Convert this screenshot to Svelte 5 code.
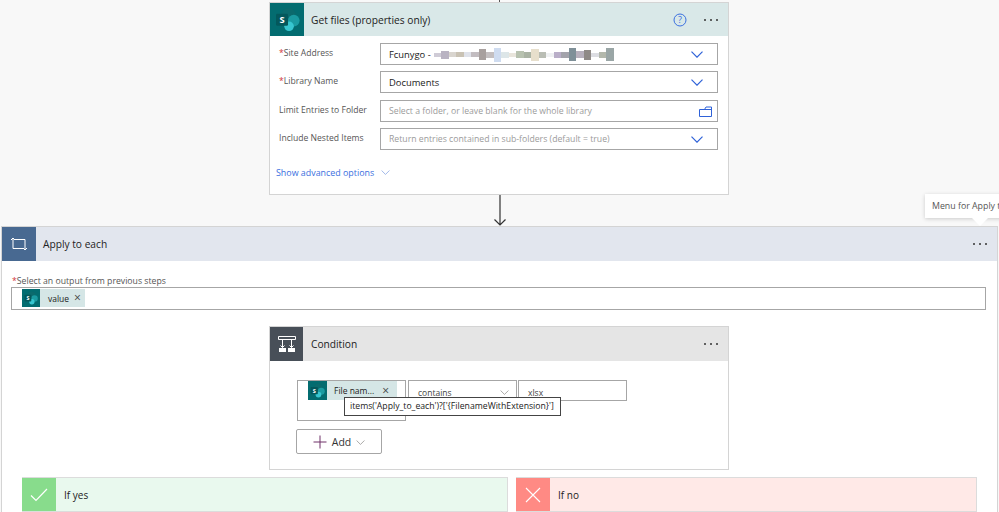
<script>
  // colours and heights of the blurred-out site name, one block per pixelated cell
  const blurred = [
    ['#cfcbd6', 4], ['#b9b3c2', 8], ['#d9d5cf', 5], ['#c9c2b4', 5], ['#dfe2ea', 5], ['#c2bcc0', 5], ['#a8a09e', 11], ['#c4bfc0', 6],
    ['#cfdcf0', 14], ['#dde6e8', 6], ['#e9e5dc', 4], ['#b8c2b0', 7], ['#aab3a4', 6], ['#e7dfcc', 12], ['#b9bdb4', 6], ['#eef0f2', 4],
    ['#b9aec8', 6], ['#a3a3ab', 6], ['#7f9098', 13], ['#b7b0bc', 7], ['#8f8a86', 10], ['#dcdde2', 4], ['#b3b8ac', 6], ['#9aa6a6', 13]
  ];
  const fields = [
    { label: 'Site Address', required: true, kind: 'blur', value: 'Fcunygo -', icon: 'chev' },
    { label: 'Library Name', required: true, kind: 'value', value: 'Documents', icon: 'chev' },
    { label: 'Limit Entries to Folder', required: false, kind: 'hint', value: 'Select a folder, or leave blank for the whole library', icon: 'folder' },
    { label: 'Include Nested Items', required: false, kind: 'hint', value: 'Return entries contained in sub-folders (default = true)', icon: 'chev' }
  ];
</script>

{#snippet spLogo(size)}
  <svg class="sp-logo" width={size} height={size} viewBox="0 0 24 24" aria-hidden="true">
    <circle cx="13" cy="8" r="7" fill="#0b6a6d" />
    <circle cx="18" cy="13" r="5.6" fill="#1a9ba1" />
    <circle cx="13.5" cy="18.5" r="4.6" fill="#37c6d0" />
    <rect x="1" y="6.5" width="11.5" height="11.5" rx="1.2" fill="#04585c" />
    <text x="6.8" y="15.6" text-anchor="middle" class="sp-s">S</text>
  </svg>
{/snippet}

{#snippet chevron(color, w, sw = 1)}
  <svg width={w} height={Math.round(w * 0.58)} viewBox="0 0 12 7" aria-hidden="true">
    <path d="M.5.7 6 6.2 11.5.7" fill="none" stroke={color} stroke-width={sw} />
  </svg>
{/snippet}

<div class="canvas">
  <div class="tick"></div>

  <section class="card action">
    <header class="head sp-head">
      <div class="tile sp-tile">{@render spLogo(25)}</div>
      <span class="title">Get files (properties only)</span>
      <svg class="help" width="14" height="14" viewBox="0 0 14 14" aria-hidden="true">
        <circle cx="7" cy="7" r="6" fill="none" stroke="#3a6fe0" stroke-width="1" />
        <text x="7" y="10.2" text-anchor="middle" class="help-q">?</text>
      </svg>
      <span class="dots"><i></i><i></i><i></i></span>
    </header>
    <div class="fields">
      {#each fields as f}
        <div class="field">
          <span class="field-label">{#if f.required}<b>*</b>{/if}{f.label}</span>
          <div class="input">
            <span class="text" class:hint={f.kind === 'hint'}>{f.value}</span>
            {#if f.kind === 'blur'}
              <span class="blur">
                {#each blurred as [c, h]}
                  <i style="background:{c};height:{h}px"></i>
                {/each}
              </span>
            {/if}
            {#if f.icon === 'chev'}
              <span class="end">{@render chevron('#2f62d8', 12, 1.2)}</span>
            {:else}
              <svg class="end folder" width="13" height="11" viewBox="0 0 13 11" aria-hidden="true">
                <path d="M.5 3.5h12M.5 3.5v7h12v-9.5H7L5.5 3.5" fill="none" stroke="#2f62d8" stroke-width="1" />
              </svg>
            {/if}
          </div>
        </div>
      {/each}
      <div class="advanced">
        <span>Show advanced options</span>
        {@render chevron('#7c9ce0', 9)}
      </div>
    </div>
  </section>

  <div class="arrow">
    <svg width="14" height="31" viewBox="0 0 14 31" aria-hidden="true">
      <path d="M7 0v30M1.5 24.5 7 30l5.5-5.5" fill="none" stroke="#333" stroke-width="1.2" />
    </svg>
  </div>

  <section class="loop">
    <div class="tooltip">Menu for Apply to each</div>
    <header class="head loop-head">
      <div class="tile loop-tile">
        <svg width="18" height="14" viewBox="0 0 18 14" aria-hidden="true">
          <path d="M1 3 3 1l2 2M3 1v10.5h10M5 2.5h10V13M13 11l2 2 2-2" fill="none" stroke="#fff" stroke-width="1" />
        </svg>
      </div>
      <span class="title">Apply to each</span>
      <span class="dots"><i></i><i></i><i></i></span>
    </header>
    <div class="loop-body">
      <div class="output-label"><b>*</b>Select an output from previous steps</div>
      <div class="output-input">
        <span class="token">
          <span class="token-icon">{@render spLogo(14)}</span>
          <span class="token-text">value</span>
          <span class="token-x">×</span>
        </span>
      </div>

      <section class="card condition">
        <header class="head cond-head">
          <div class="tile cond-tile">
            <svg width="20" height="20" viewBox="0 0 20 20" aria-hidden="true">
              <path d="M1.5 2.5h17v3h-17zM5.5 5.5v8M14.5 5.5v8M3.5 11.5l2 2 2-2M12.5 11.5l2 2 2-2" fill="none" stroke="#fff" stroke-width="1" />
              <path d="M2 14h7v4H2zM11 14h7v4h-7z" fill="#fff" />
            </svg>
          </div>
          <span class="title">Condition</span>
          <span class="dots"><i></i><i></i><i></i></span>
        </header>
        <div class="cond-body">
          <div class="rule">
            <div class="rule-left">
              <span class="token wide">
                <span class="token-icon big">{@render spLogo(15)}</span>
                <span class="token-text">File nam...</span>
                <span class="token-x">×</span>
              </span>
            </div>
            <div class="rule-box contains">
              <span>contains</span>
              {@render chevron('#8a8886', 9)}
            </div>
            <div class="rule-box xlsx">xlsx</div>
            <div class="expr">items('Apply_to_each')?['{'{'}FilenameWithExtension}']</div>
          </div>
          <button class="add" type="button">
            <svg width="14" height="14" viewBox="0 0 14 14" aria-hidden="true">
              <path d="M7 .5v13M.5 7h13" stroke="#6f3069" stroke-width="1" fill="none" />
            </svg>
            <span>Add</span>
            {@render chevron('#8a8886', 9)}
          </button>
        </div>
      </section>

      <div class="branches">
        <div class="branch yes">
          <div class="tile yes-tile">
            <svg width="18" height="14" viewBox="0 0 18 14" aria-hidden="true">
              <path d="M1 7.5 6 12.5 17 1" fill="none" stroke="#fff" stroke-width="1.2" />
            </svg>
          </div>
          <span class="branch-title">If yes</span>
        </div>
        <div class="branch no">
          <div class="tile no-tile">
            <svg width="16" height="16" viewBox="0 0 16 16" aria-hidden="true">
              <path d="M1 1l14 14M15 1 1 15" fill="none" stroke="#fff" stroke-width="1.1" />
            </svg>
          </div>
          <span class="branch-title">If no</span>
        </div>
      </div>
    </div>
  </section>
</div>

<style>
  :global(body) {
    margin: 0;
    background: #f8f8f8;
  }

  .canvas {
    width: 999px;
    height: 512px;
    overflow: hidden;
    display: flex;
    flex-direction: column;
    align-items: center;
    font-family: "Open Sans", "Noto Sans", sans-serif;
    font-size: 9px;
    color: #333;
  }

  .tick {
    width: 1px;
    height: 2px;
    flex: none;
    background: #555;
  }

  .card {
    width: 460px;
    box-sizing: border-box;
    border: 1px solid #d4d4d4;
    background: #fff;
    flex: none;
  }

  .action {
    margin-right: 1px;
  }

  .head {
    display: flex;
    align-items: center;
    height: 34px;
  }

  .sp-head { height: 33px; }

  .tile {
    width: 34px;
    height: 100%;
    flex: none;
    display: flex;
    align-items: center;
    justify-content: center;
  }

  .title {
    flex: 1;
    margin-left: 7px;
    font-size: 10.2px;
    color: #222;
  }

  .sp-head { background: #d9e8e8; }
  .sp-tile { background: #036c70; }
  .loop-head { background: #e2e6ee; height: 34px; }
  .loop-tile { background: #486991; }
  .cond-head { background: #e5e5e5; }
  .cond-tile { background: #484f58; }

  .sp-s {
    font-size: 9px;
    font-weight: 700;
    fill: #fff;
  }

  .help-q {
    font-size: 9px;
    fill: #3a6fe0;
  }

  .help { margin-right: 17px; }

  .dots {
    display: flex;
    gap: 4px;
    margin-right: 10px;
  }

  .dots i {
    width: 2px;
    height: 2px;
    border-radius: 50%;
    background: #333;
  }

  .fields {
    height: 158px;
    box-sizing: border-box;
    padding: 7px 10px 0 9px;
  }

  .field {
    display: flex;
    height: 22px;
    margin-bottom: 6.33px;
  }

  .field-label {
    width: 101px;
    flex: none;
    font-size: 8.6px;
    color: #555;
    line-height: 20px;
  }

  b {
    color: #d13438;
    font-weight: 400;
  }

  .input {
    flex: 1;
    display: flex;
    align-items: center;
    box-sizing: border-box;
    border: 1px solid #a6a6a6;
    padding: 1px 8px 0;
    background: #fff;
  }

  .text { font-size: 9.4px; color: #222; }
  .text.hint { font-size: 8.7px; color: #9b9b9b; }

  .blur {
    display: flex;
    align-items: center;
    margin-left: 3px;
  }

  .blur i {
    width: 7.5px;
    display: block;
  }

  .end {
    margin-left: auto;
    margin-right: 6px;
    display: flex;
  }

  .end.folder {
    margin-right: -3px;
  }

  .advanced {
    display: flex;
    align-items: center;
    gap: 7px;
    margin: 16px 0 0 -3px;
    font-size: 8.9px;
    color: #3a6fe0;
  }

  .arrow {
    height: 31px;
    flex: none;
    display: flex;
  }

  .loop {
    position: relative;
    flex: none;
    width: 997px;
    box-sizing: border-box;
    border: 1px solid #d4d4d4;
    background: #fff;
  }

  .tooltip {
    position: absolute;
    top: -33px;
    left: 923px;
    width: 90px;
    height: 24px;
    padding-left: 7px;
    line-height: 25px;
    background: #fff;
    white-space: nowrap;
    font-size: 8.8px;
    color: #555;
    box-shadow: 0 1px 4px rgba(0, 0, 0, .18);
  }

  .tooltip::after {
    content: '';
    position: absolute;
    left: 47px;
    bottom: -8px;
    border: 8px solid transparent;
    border-bottom: 0;
    border-top-color: #fff;
  }

  .loop-body {
    padding: 14px 10px 0 9px;
  }

  .output-label {
    margin-left: 1px;
    font-size: 8.7px;
    color: #555;
    line-height: 12px;
  }

  .output-input {
    height: 23px;
    box-sizing: border-box;
    border: 1px solid #a6a6a6;
    padding: 1px 10px;
    width: 975px;
  }

  .token {
    display: inline-flex;
    align-items: center;
    height: 18px;
    background: #d5e6e6;
    padding-right: 4px;
  }

  .token-icon {
    width: 18px;
    height: 18px;
    background: #036c70;
    display: flex;
    align-items: center;
    justify-content: center;
    margin-right: 8px;
  }

  .token-text { font-size: 8.5px; color: #222; }

  .token-x {
    margin-left: 5px;
    font-size: 12px;
    line-height: 12px;
    color: #444;
  }

  .condition {
    margin: 16px 0 0 258px;
    height: 144px;
  }

  .condition .tile { width: 33px; }
  .condition .title { margin-left: 8px; }

  .cond-body {
    padding: 19px 0 0 27px;
  }

  .rule {
    position: relative;
    display: flex;
    gap: 1px;
    align-items: flex-start;
  }

  .rule-left {
    width: 109px;
    height: 41px;
    box-sizing: border-box;
    border: 1px solid #a6a6a6;
    padding-left: 10px;
    margin-right: 1px;
  }

  .token.wide {
    width: 89px;
    height: 19px;
    box-sizing: border-box;
    justify-content: flex-start;
  }

  .token-icon.big {
    width: 19px;
    height: 19px;
    margin-right: 7px;
  }

  .token.wide .token-x { margin-left: 8px; }

  .rule-box {
    width: 109px;
    height: 21px;
    box-sizing: border-box;
    border: 1px solid #a6a6a6;
    display: flex;
    align-items: center;
    justify-content: space-between;
    padding: 3px 7px 0 9px;
    font-size: 8.5px;
    color: #444;
  }

  .expr {
    position: absolute;
    left: 47px;
    top: 17px;
    width: 217px;
    height: 19px;
    padding: 0 5px;
    box-sizing: border-box;
    border: 1px solid #444;
    background: #fff;
    white-space: nowrap;
    line-height: 17px;
    font-size: 8.7px;
    color: #222;
  }

  .add {
    margin: 8px 0 0 -1px;
    width: 86px;
    height: 25px;
    display: flex;
    align-items: center;
    justify-content: center;
    gap: 5px;
    border: 1px solid #a6a6a6;
    border-radius: 2px;
    background: #fff;
    font-family: inherit;
    font-size: 10.5px;
    color: #333;
    padding: 1px 0 0;
  }

  .branches {
    display: flex;
    gap: 8px;
    margin: 7px 0 0 11px;
  }

  .branch {
    display: flex;
    align-items: center;
    height: 35px;
    box-sizing: border-box;
    border: 1px solid #dcdcdc;
    border-left: 0;
  }

  .yes { width: 486px; background: #e9f9ee; }
  .no { width: 461px; background: #ffe9e7; }
  .yes-tile { background: #88dc8c; }
  .no-tile { background: #ff8a84; }

  .branch-title {
    margin-left: 8px;
    font-size: 10px;
    color: #222;
  }
</style>
